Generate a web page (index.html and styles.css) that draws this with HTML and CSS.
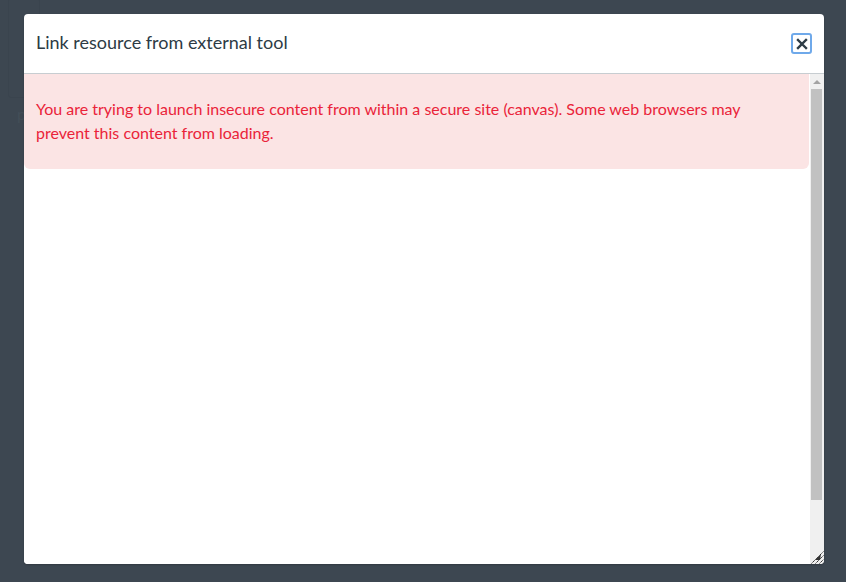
FILE: index.html
```html
<!DOCTYPE html>
<html>
<head>
<meta charset="utf-8">
<link rel="stylesheet" href="styles.css">
</head>
<body>
<div class="backdrop">
  <div class="ghost-panel"></div>
  <div class="ghost-text">p</div>
</div>
<div class="dialog" role="dialog">
  <div class="dialog-header">
    <h2 class="dialog-title">Link resource from external tool</h2>
    <button class="close-btn" aria-label="Close">
      <svg width="12" height="12" viewBox="0 0 12 12"><path d="M2 2 L10 10 M10 2 L2 10" stroke="#2d3b45" stroke-width="2.4" stroke-linecap="square"/></svg>
    </button>
  </div>
  <div class="dialog-body">
    <div class="frame">
      <div class="alert">You are trying to launch insecure content from within a secure site (canvas). Some web browsers may prevent this content from loading.</div>
    </div>
    <div class="scrollbar">
      <div class="sb-arrow"><span class="tri"></span></div>
      <div class="sb-track"><div class="sb-thumb"></div></div>
      <div class="sb-corner">
        <svg width="14" height="14" viewBox="0 0 14 14"><path d="M1.5 13.5 L13.5 1.5 M5.5 13.5 L13.5 5.5 M9.5 13.5 L13.5 9.5" stroke="#222" stroke-width="1" stroke-dasharray="1.4 0.6"/><path d="M5 10 L11 4 L10 10 Z" fill="#333"/></svg>
      </div>
    </div>
  </div>
</div>
</body>
</html>
```

FILE: styles.css
```css
html, body {
  margin: 0;
  padding: 0;
}
body {
  background: #3d4751;
  width: 846px;
  height: 582px;
  overflow: hidden;
  font-family: Lato, "Open Sans", sans-serif;
  position: relative;
}
.backdrop {
  position: absolute;
  inset: 0;
}
.ghost-panel {
  position: absolute;
  left: 8px;
  top: -2px;
  width: 30px;
  height: 98px;
  border: 1px solid #3a444e;
  border-radius: 3px;
}
.ghost-text {
  position: absolute;
  left: 17px;
  top: 104px;
  font-size: 16px;
  color: #434e58;
}
.dialog {
  position: absolute;
  left: 24px;
  top: 14px;
  width: 800px;
  height: 550px;
  background: #fff;
  border-radius: 4px;
  display: flex;
  flex-direction: column;
  overflow: hidden;
  box-shadow: 0 1px 2px rgba(0,0,0,0.2);
}
.dialog-header {
  height: 59px;
  border-bottom: 1px solid #c7cdd1;
  display: flex;
  align-items: center;
  padding: 0 12px;
  flex-shrink: 0;
}
.dialog-title {
  margin: -4px 0 0 0;
  flex: 1;
  font-size: 18px;
  font-weight: 400;
  color: #2d3b45;
  line-height: 24px;
}
.close-btn {
  width: 21px;
  height: 21px;
  margin-top: 0;
  padding: 0;
  border: 2px solid #6fa9ea;
  border-radius: 3px;
  background: #fff;
  display: flex;
  align-items: center;
  justify-content: center;
  cursor: pointer;
}
.dialog-body {
  flex: 1;
  display: flex;
  min-height: 0;
}
.frame {
  flex: 1;
  background: #fff;
  padding-right: 1px;
}
.alert {
  background: #fbe4e4;
  color: #ea2339;
  font-size: 16px;
  line-height: 24px;
  padding: 23px 14px 24px 12px;
  border-radius: 0 0 6px 6px;
}
.scrollbar {
  width: 14px;
  background: #f0f0f0;
  display: flex;
  flex-direction: column;
}
.sb-arrow {
  height: 15px;
  display: flex;
  align-items: center;
  justify-content: center;
}
.tri {
  width: 0;
  height: 0;
  border-left: 4px solid transparent;
  border-right: 4px solid transparent;
  border-bottom: 4px solid #a3a3a3;
}
.sb-track {
  flex: 1;
  padding: 0 2px 0 1px;
}
.sb-thumb {
  height: 411px;
  background: #c1c1c1;
}
.sb-corner {
  height: 14px;
  display: flex;
}
```
